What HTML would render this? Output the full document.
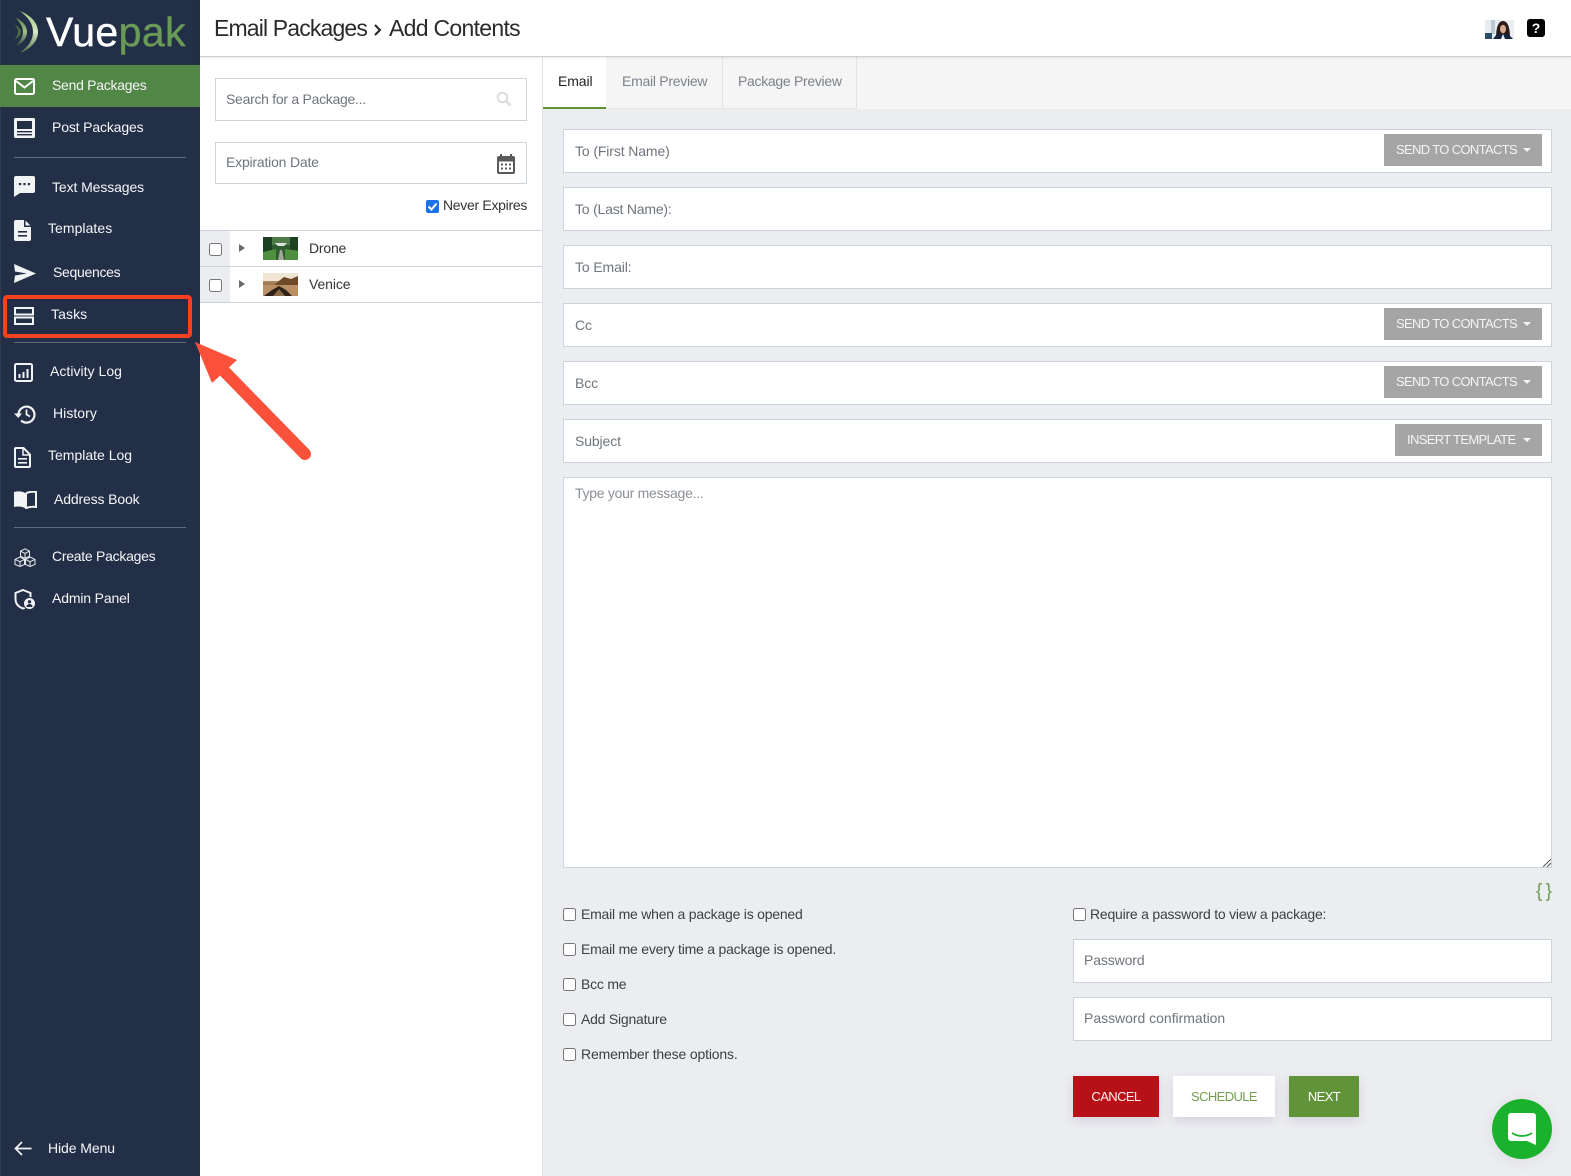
<!DOCTYPE html>
<html><head><meta charset="utf-8"><style>
*{box-sizing:border-box}
html,body{margin:0;padding:0;width:1571px;height:1176px;overflow:hidden;background:#fff;font-family:"Liberation Sans",sans-serif;font-size:14px;color:#333}
.a{position:absolute}
.t{position:absolute;line-height:20px;white-space:nowrap}
#side{left:0;top:0;width:200px;height:1176px;background:#232f47;border-left:1px solid #2e394f}
.n{color:#f4f5f7;position:absolute;line-height:20px;white-space:nowrap;font-size:14px;letter-spacing:-.05px}
.hr{position:absolute;left:14px;width:172px;height:1px;background:#5f6a80}
.f{position:absolute;left:563px;width:989px;height:44px;background:#fff;border:1px solid #ccd3da}
.p{position:absolute;line-height:20px;white-space:nowrap;color:#6f757c;letter-spacing:-.12px}
.b{position:absolute;height:32px;background:#a5a5a5;color:#f4f4f4;font-size:13px;line-height:31px;padding-left:12px;white-space:nowrap;letter-spacing:-.65px}
.b:after{content:"";position:absolute;right:11px;top:14px;border-left:4px solid transparent;border-right:4px solid transparent;border-top:4px solid #f4f4f4}
.c{position:absolute;width:13px;height:13px;background:#fff;border:1px solid #767676;border-radius:2.5px}
.l{position:absolute;line-height:20px;white-space:nowrap;color:#3c3f44;letter-spacing:-.22px}
.btn{position:absolute;top:1076px;height:41px;line-height:41px;text-align:center;font-size:13px;box-shadow:0 4px 10px rgba(40,50,80,.13);letter-spacing:-.6px}
</style></head><body>
<div class="a" style="left:200px;top:0;width:1371px;height:57px;background:#fff;border-bottom:1px solid #cfcfcf;box-shadow:0 1px 2px rgba(0,0,0,.08);z-index:3"></div>
<div class="t" style="left:214px;top:13px;font-size:23px;line-height:30px;color:#2a2a2c;z-index:4;letter-spacing:-.85px">Email Packages</div>
<svg class="a" style="left:372px;top:23px;z-index:4" width="12" height="14"><path d="M3 2l5 5-5 5" fill="none" stroke="#222" stroke-width="2"/></svg>
<div class="t" style="left:389px;top:13px;font-size:23px;line-height:30px;color:#2a2a2c;z-index:4;letter-spacing:-.7px">Add Contents</div>
<svg class="a" style="left:1485px;top:20px;z-index:4" width="29" height="19"><rect width="29" height="19" fill="#e8edf1"/><rect x="6" y="0" width="4" height="14" fill="#b9c9d6"/><rect x="0" y="13" width="7" height="6" fill="#2c4d6a"/><path d="M11 19c0-8 1-18 7-18s7 10 7 18z" fill="#2a1b18"/><ellipse cx="18" cy="9" rx="3" ry="4.300" fill="#d9a98f"/><path d="M8 19l4-5h11l5 5z" fill="#16233f"/><path d="M16 19l2-5 2 5z" fill="#f2f2f2"/></svg>
<div class="a" style="left:1527px;top:19px;width:18px;height:18px;background:#000;border-radius:3px;color:#fff;font-size:14px;font-weight:bold;line-height:18px;text-align:center;z-index:4">?</div>

<div class="a" id="side"></div>
<svg class="a" style="left:13px;top:9px" width="28" height="46" viewBox="0 0 28 46"><defs><linearGradient id="g" x1="0" y1="0" x2="0" y2="1"><stop offset="0" stop-color="#9cc47a"/><stop offset=".5" stop-color="#dbe8c8"/><stop offset="1" stop-color="#4b7140"/></linearGradient><linearGradient id="g2" x1="0" y1="0" x2="0" y2="1"><stop offset="0" stop-color="#5d8748"/><stop offset=".5" stop-color="#a3c08c"/><stop offset="1" stop-color="#324f34"/></linearGradient></defs><path d="M7 2c8 3 18 10 18 21S15 41 7 44c6-5 13-11 13-21S13 7 7 2z" fill="url(#g)"/><path d="M3 9c5 2 11 7 11 14S8 35 3 37c3-4 7-8 7-14S6 13 3 9z" fill="url(#g2)"/><path d="M2 16c3 1 6 4 6 7s-3 6-6 7c1-2 3-4 3-7s-2-5-3-7z" fill="#4a6b45"/></svg>
<div class="t" style="left:46px;top:7px;font-size:41px;line-height:50px;color:#fff;letter-spacing:.4px;-webkit-text-stroke:.4px #fff">Vue<span style="color:#6a9a58;-webkit-text-stroke:.4px #6a9a58">pak</span></div>
<div class="a" style="left:0;top:65px;width:200px;height:42px;background:#518646"></div>

<svg class="a" style="left:14px;top:78px" width="21" height="17"><rect x="1" y="1" width="19" height="15" rx="1.5" fill="none" stroke="#fff" stroke-width="2"/><path d="M2 3l8.5 6.5L19 3" fill="none" stroke="#fff" stroke-width="2"/></svg>
<div class="n" style="left:52px;top:75px;letter-spacing:-.28px">Send Packages</div>
<svg class="a" style="left:14px;top:118px" width="21" height="20"><rect width="21" height="20" rx="1.5" fill="#f2f3f5"/><rect x="3" y="3" width="15" height="8" fill="#232f47"/><rect x="3" y="13" width="15" height="1.4" fill="#232f47"/><rect x="3" y="16" width="15" height="1.4" fill="#232f47"/></svg>
<div class="n" style="left:52px;top:117px;letter-spacing:-.15px">Post Packages</div>
<div class="hr" style="top:157px"></div>
<svg class="a" style="left:14px;top:176px" width="21" height="21"><path d="M2 0h17a2 2 0 0 1 2 2v13a2 2 0 0 1-2 2H6l-6 4V2a2 2 0 0 1 2-2z" fill="#f2f3f5"/><rect x="5" y="7" width="2.2" height="2.2" fill="#232f47"/><rect x="9.4" y="7" width="2.2" height="2.2" fill="#232f47"/><rect x="13.8" y="7" width="2.2" height="2.2" fill="#232f47"/></svg>
<div class="n" style="left:52px;top:177px;letter-spacing:-.1px">Text Messages</div>
<svg class="a" style="left:14px;top:220px" width="17" height="21"><path d="M2 0h8v7h7v12a2 2 0 0 1-2 2H2a2 2 0 0 1-2-2V2a2 2 0 0 1 2-2zM11.500 .5L16.500 5.500h-5z" fill="#f2f3f5"/><rect x="4" y="11" width="9" height="1.6" fill="#232f47"/><rect x="4" y="15" width="9" height="1.6" fill="#232f47"/></svg>
<div class="n" style="left:48px;top:218px;letter-spacing:.05px">Templates</div>
<svg class="a" style="left:14px;top:264px" width="22" height="19"><path d="M0 0l22 9.5L0 19l1-7.5 12-2-12-2z" fill="#f2f3f5"/></svg>
<div class="n" style="left:53px;top:262px;letter-spacing:-.3px">Sequences</div>
<svg class="a" style="left:14px;top:307px" width="20" height="18"><rect x="1" y="1" width="18" height="6.5" fill="none" stroke="#f2f3f5" stroke-width="2"/><rect x="1" y="10.5" width="18" height="6.5" fill="none" stroke="#f2f3f5" stroke-width="2"/></svg>
<div class="n" style="left:51px;top:304px;letter-spacing:.1px">Tasks</div>
<div class="a" style="left:3px;top:295px;width:189px;height:43px;border:4px solid #f4411f;border-radius:4px"></div>
<div class="hr" style="top:342px"></div>
<svg class="a" style="left:14px;top:363px" width="19" height="19"><rect x="1" y="1" width="17" height="17" rx="1.5" fill="none" stroke="#f2f3f5" stroke-width="2"/><rect x="4.5" y="11" width="2" height="4" fill="#f2f3f5"/><rect x="8.5" y="9" width="2" height="6" fill="#f2f3f5"/><rect x="12.5" y="6" width="2" height="9" fill="#f2f3f5"/></svg>
<div class="n" style="left:50px;top:361px;letter-spacing:.03px">Activity Log</div>
<svg class="a" style="left:14px;top:404px" width="23" height="20"><path d="M4.5 10a8 8 0 1 1 2.6 6.5" fill="none" stroke="#f2f3f5" stroke-width="2.2"/><path d="M0 9.5h8L4.3 14z" fill="#f2f3f5"/><path d="M12.5 5.5v5l3.5 2" fill="none" stroke="#f2f3f5" stroke-width="1.8"/></svg>
<div class="n" style="left:53px;top:403px;letter-spacing:.05px">History</div>
<svg class="a" style="left:14px;top:447px" width="17" height="21"><path d="M2 1h7.5L16 7.500V19a1 1 0 0 1-1 1H2a1 1 0 0 1-1-1V2a1 1 0 0 1 1-1z" fill="none" stroke="#f2f3f5" stroke-width="2"/><path d="M9 1v7h7" fill="none" stroke="#f2f3f5" stroke-width="1.5"/><rect x="4" y="11" width="9" height="1.6" fill="#f2f3f5"/><rect x="4" y="15" width="9" height="1.6" fill="#f2f3f5"/></svg>
<div class="n" style="left:48px;top:445px;letter-spacing:0">Template Log</div>
<svg class="a" style="left:14px;top:491px" width="23" height="18"><path d="M0 1c4-1 8-1 11 1v15c-3-1.500-7-2-11-1z" fill="#f2f3f5"/><path d="M12 2.500c3-2 6.500-2 10-1.500v15c-3.500-.5-7 0-10 1z" fill="none" stroke="#f2f3f5" stroke-width="2"/></svg>
<div class="n" style="left:54px;top:489px;letter-spacing:-.14px">Address Book</div>
<div class="hr" style="top:527px"></div>
<svg class="a" style="left:14px;top:548px" width="22" height="19" fill="none" stroke="#e8eaee" stroke-width="1"><path d="M11 .8l4.500 2.400v5L11 10.500 6.500 8.200v-5zM6.500 3.200L11 5.500l4.500-2.300M11 5.500v5"/><path d="M6 9l4.500 2.400v5L6 18.500 1 16.400v-5zM1 11.400L6 13.700l4.500-2.300M6 13.700v4.800"/><path d="M16 9l5 2.400v5l-5 2.100-4.500-2.100v-5zM11.500 11.400L16 13.700l5-2.300M16 13.700v4.800"/></svg>
<div class="n" style="left:52px;top:546px;letter-spacing:-.27px">Create Packages</div>
<svg class="a" style="left:14px;top:589px" width="22" height="21"><path d="M9 1l7.500 3v6c0 5-3.500 8-7.500 9.500C5 18 1.500 15 1.500 10V4z" fill="none" stroke="#f2f3f5" stroke-width="2"/><circle cx="15.500" cy="14.500" r="6" fill="#f2f3f5" stroke="#232f47" stroke-width="1"/><circle cx="15.500" cy="12.800" r="1.700" fill="#232f47"/><path d="M12.500 18c0-2 1.500-3 3-3s3 1 3 3z" fill="#232f47"/></svg>
<div class="n" style="left:52px;top:588px;letter-spacing:-.15px">Admin Panel</div>
<svg class="a" style="left:14px;top:1141px" width="18" height="15"><path d="M8 1L1.500 7.500 8 14M1.500 7.500H17.500" fill="none" stroke="#f2f3f5" stroke-width="1.700"/></svg>
<div class="n" style="left:48px;top:1138px;letter-spacing:-.08px">Hide Menu</div>

<div class="a" style="left:200px;top:57px;width:343px;height:1119px;background:#fff;border-right:1px solid #dfe2e6"></div>
<div class="a" style="left:215px;top:78px;width:312px;height:43px;border:1px solid #ccd3da"></div>
<div class="p" style="left:226px;top:89px;letter-spacing:-.28px">Search for a Package...</div>
<svg class="a" style="left:496px;top:91px" width="16" height="16"><circle cx="6.500" cy="6.500" r="4.800" fill="none" stroke="#dcdcdc" stroke-width="2"/><path d="M10 10l4.500 4.500" stroke="#dcdcdc" stroke-width="2.400"/></svg>
<div class="a" style="left:215px;top:142px;width:312px;height:42px;border:1px solid #ccd3da"></div>
<div class="p" style="left:226px;top:152px;letter-spacing:-.2px">Expiration Date</div>
<svg class="a" style="left:497px;top:154px" width="18" height="20"><rect x="0" y="2" width="18" height="18" rx="2" fill="#5a5a5a"/><rect x="2" y="7.500" width="14" height="10.500" fill="#fff"/><rect x="3" y="0" width="2" height="4" fill="#5a5a5a"/><rect x="13" y="0" width="2" height="4" fill="#5a5a5a"/><g fill="#5a5a5a"><rect x="4" y="9.500" width="2" height="2"/><rect x="8" y="9.500" width="2" height="2"/><rect x="12" y="9.500" width="2" height="2"/><rect x="4" y="13.500" width="2" height="2"/><rect x="8" y="13.500" width="2" height="2"/><rect x="12" y="13.500" width="2" height="2"/></g></svg>
<svg class="a" style="left:426px;top:200px" width="13" height="13"><rect width="13" height="13" rx="2" fill="#1a73e8"/><path d="M2.500 6.500l3 3 5-6" fill="none" stroke="#fff" stroke-width="2"/></svg>
<div class="l" style="left:443px;top:195px;color:#333;letter-spacing:-.3px">Never Expires</div>

<div class="a" style="left:200px;top:230px;width:342px;height:73px;border-top:1px solid #ccd3da;border-bottom:1px solid #ccd3da"></div>
<div class="a" style="left:200px;top:266px;width:342px;height:1px;background:#ccd3da"></div>
<div class="a" style="left:200px;top:231px;width:30px;height:35px;background:#ecedf1"></div>
<div class="a" style="left:200px;top:267px;width:30px;height:35px;background:#ecedf1"></div>
<div class="c" style="left:209px;top:243px"></div>
<div class="c" style="left:209px;top:279px"></div>
<div class="a" style="left:239px;top:244px;border-left:6px solid #6b6b6b;border-top:4.500px solid transparent;border-bottom:4.500px solid transparent"></div>
<div class="a" style="left:239px;top:280px;border-left:6px solid #6b6b6b;border-top:4.500px solid transparent;border-bottom:4.500px solid transparent"></div>
<svg class="a" style="left:263px;top:237px" width="35" height="23"><rect width="35" height="23" fill="#2f5c2e"/><path d="M0 0h9v15H0zM27 0h8v13h-8z" fill="#1d3f22"/><path d="M9 0h18v8H9z" fill="#4f7a4a"/><path d="M0 15l13-3v11H0zM35 14l-13-2v11h13z" fill="#4f8f40"/><path d="M15 23l2-10h2l2 10z" fill="#a3a69a"/><path d="M12 6h12l-3 3h-6z" fill="#dfe3dd"/></svg>
<svg class="a" style="left:263px;top:273px" width="35" height="23"><rect width="35" height="23" fill="#b98f66"/><rect width="35" height="8" fill="#f0e4d4"/><path d="M12 11l9-7 7 2 7-3v9H12z" fill="#6e4a2b"/><path d="M0 9h12v3H0z" fill="#a07b54"/><path d="M1 23l8-6 7-4 7 4 6 6z" fill="#2d2118"/><path d="M10 23l6-7 6 7z" fill="#8d6a48"/></svg>
<div class="l" style="left:309px;top:238px;color:#333;letter-spacing:-.2px">Drone</div>
<div class="l" style="left:309px;top:274px;color:#333;letter-spacing:-.1px">Venice</div>

<div class="a" style="left:543px;top:57px;width:1028px;height:1119px;background:#ecedf1"></div>
<div class="a" style="left:543px;top:57px;width:1028px;height:52px;background:#f5f5f5"></div>
<div class="a" style="left:543px;top:57px;width:63px;height:52px;background:#fff;border-bottom:2px solid #5e9234"></div>
<div class="a" style="left:606px;top:57px;width:117px;height:52px;border-right:1px solid #e3e3e3;border-bottom:1px solid #e6e6e6"></div>
<div class="a" style="left:723px;top:57px;width:134px;height:52px;border-right:1px solid #e3e3e3;border-bottom:1px solid #e6e6e6"></div>
<div class="t" style="left:558px;top:71px;color:#222;letter-spacing:-.1px">Email</div>
<div class="t" style="left:622px;top:71px;color:#7c828b;letter-spacing:-.27px">Email Preview</div>
<div class="t" style="left:738px;top:71px;color:#7c828b;letter-spacing:-.3px">Package Preview</div>

<div class="f" style="top:129px"></div><div class="p" style="left:575px;top:141px">To (First Name)</div>
<div class="b" style="left:1384px;top:134px;width:158px">SEND TO CONTACTS</div>
<div class="f" style="top:187px"></div><div class="p" style="left:575px;top:199px;letter-spacing:-.2px">To (Last Name):</div>
<div class="f" style="top:245px"></div><div class="p" style="left:575px;top:257px">To Email:</div>
<div class="f" style="top:303px"></div><div class="p" style="left:575px;top:315px">Cc</div>
<div class="b" style="left:1384px;top:308px;width:158px">SEND TO CONTACTS</div>
<div class="f" style="top:361px"></div><div class="p" style="left:575px;top:373px">Bcc</div>
<div class="b" style="left:1384px;top:366px;width:158px">SEND TO CONTACTS</div>
<div class="f" style="top:419px"></div><div class="p" style="left:575px;top:431px">Subject</div>
<div class="b" style="left:1395px;top:424px;width:147px">INSERT TEMPLATE</div>
<div class="f" style="top:477px;height:391px"></div><div class="p" style="left:575px;top:483px;color:#8b9096;letter-spacing:-.27px">Type your message...</div>
<svg class="a" style="left:1543px;top:859px" width="8" height="8"><path d="M0 8L8 0M4 8l4-4" stroke="#555" stroke-width="1"/></svg>
<div class="t" style="left:1536px;top:880px;font-size:19px;color:#6f9c55;line-height:24px;letter-spacing:-1px">{ }</div>

<div class="c" style="left:563px;top:908px"></div><div class="l" style="left:581px;top:904px">Email me when a package is opened</div>
<div class="c" style="left:563px;top:943px"></div><div class="l" style="left:581px;top:939px">Email me every time a package is opened.</div>
<div class="c" style="left:563px;top:978px"></div><div class="l" style="left:581px;top:974px">Bcc me</div>
<div class="c" style="left:563px;top:1013px"></div><div class="l" style="left:581px;top:1009px">Add Signature</div>
<div class="c" style="left:563px;top:1048px"></div><div class="l" style="left:581px;top:1044px;letter-spacing:-.16px">Remember these options.</div>
<div class="c" style="left:1073px;top:908px"></div><div class="l" style="left:1090px;top:904px">Require a password to view a package:</div>
<div class="f" style="left:1073px;top:939px;width:479px"></div><div class="p" style="left:1084px;top:950px">Password</div>
<div class="f" style="left:1073px;top:997px;width:479px"></div><div class="p" style="left:1084px;top:1008px;letter-spacing:-.02px">Password confirmation</div>

<div class="btn" style="left:1073px;width:86px;background:#b81017;color:#fbeeee">CANCEL</div>
<div class="btn" style="left:1173px;width:102px;background:#fff;color:#74a050">SCHEDULE</div>
<div class="btn" style="left:1289px;width:70px;background:#619338;color:#fff">NEXT</div>
<div class="a" style="left:1492px;top:1099px;width:60px;height:60px;border-radius:50%;background:#1ab12d;box-shadow:0 2px 16px rgba(0,0,0,.07)"></div>
<svg class="a" style="left:1508px;top:1113px" width="28" height="33"><path d="M3 0h22a3 3 0 0 1 3 3v29l-9-4H3a3 3 0 0 1-3-3V3a3 3 0 0 1 3-3z" fill="#fff"/><path d="M4 20c6 4 14 4 20 0" fill="none" stroke="#1ab12d" stroke-width="1.700"/></svg>

<svg class="a" style="left:190px;top:335px;z-index:5" width="130" height="130"><path d="M35 37L115 119" stroke="#fb5039" stroke-width="12" stroke-linecap="round"/><path d="M5 7L47 25 22 48z" fill="#fb5039"/></svg>
</body></html>
